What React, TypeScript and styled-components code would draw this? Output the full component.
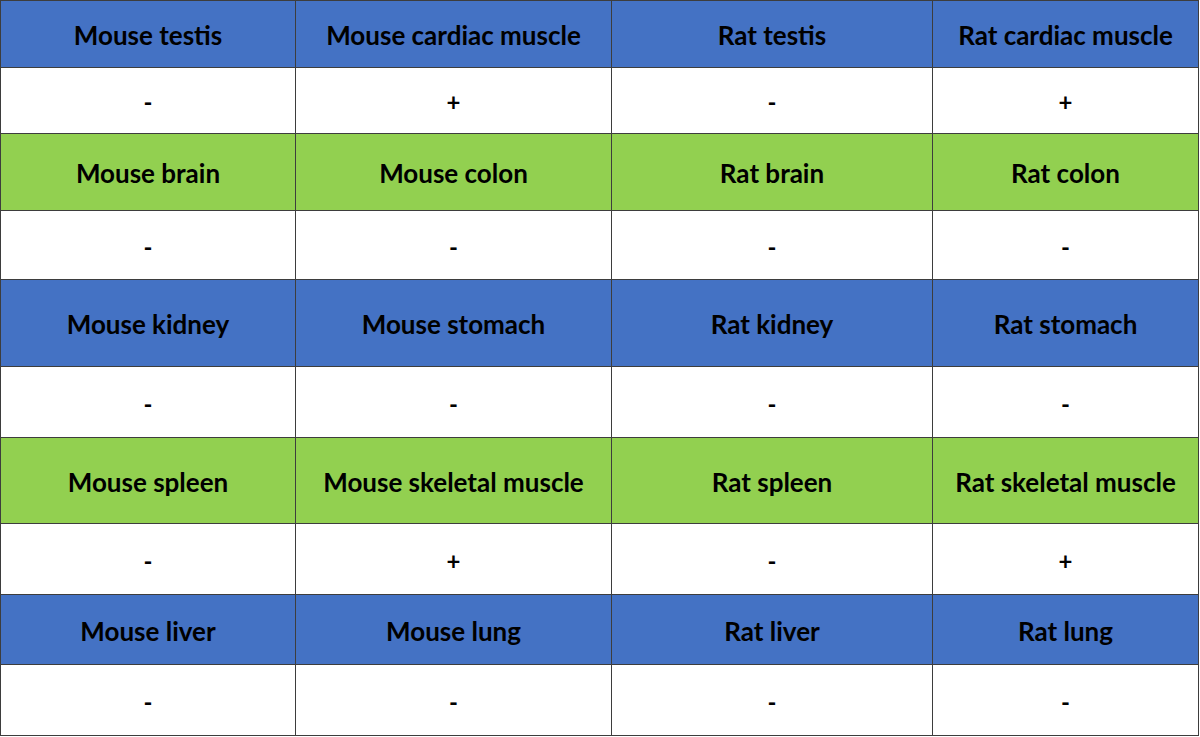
import React from "react";
import styled, { createGlobalStyle } from "styled-components";

const Global = createGlobalStyle`
  html, body { margin: 0; padding: 0; background: #ffffff; }
  body { font-family: Lato, "Open Sans", sans-serif; }
`;

const Grid = styled.div`
  display: grid;
  width: 1199px;
  grid-template-columns: 294px 315px 320px 265px;
  grid-template-rows: 66px 65px 76px 68px 86px 70px 85px 70px 69px 70px;
  gap: 1px;
  padding: 1px;
  box-sizing: border-box;
  background: #3d3d3d;
`;

const Cell = styled.div<{ $tone: "blue" | "green" | "white" }>`
  display: flex;
  align-items: center;
  justify-content: center;
  padding-top: 2px;
  background: ${(p) => (p.$tone === "blue" ? "#4472C4" : p.$tone === "green" ? "#92D050" : "#ffffff")};
  color: #000;
  font-family: Lato, "Open Sans", sans-serif;
  font-weight: 700;
  font-size: ${(p) => (p.$tone === "white" ? "24px" : "26px")};
  white-space: nowrap;
`;

const groups: { tone: "blue" | "green"; names: string[]; values: string[] }[] = [
  { tone: "blue", names: ["Mouse testis", "Mouse cardiac muscle", "Rat testis", "Rat cardiac muscle"], values: ["-", "+", "-", "+"] },
  { tone: "green", names: ["Mouse brain", "Mouse colon", "Rat brain", "Rat colon"], values: ["-", "-", "-", "-"] },
  { tone: "blue", names: ["Mouse kidney", "Mouse stomach", "Rat kidney", "Rat stomach"], values: ["-", "-", "-", "-"] },
  { tone: "green", names: ["Mouse spleen", "Mouse skeletal muscle", "Rat spleen", "Rat skeletal muscle"], values: ["-", "+", "-", "+"] },
  { tone: "blue", names: ["Mouse liver", "Mouse lung", "Rat liver", "Rat lung"], values: ["-", "-", "-", "-"] },
];

export default function App() {
  return (
    <>
      <Global />
      <Grid>
        {groups.map((g, gi) => (
          <React.Fragment key={gi}>
            {g.names.map((n) => (
              <Cell key={n} $tone={g.tone}>{n}</Cell>
            ))}
            {g.values.map((v, vi) => (
              <Cell key={`${gi}-${vi}`} $tone="white">{v}</Cell>
            ))}
          </React.Fragment>
        ))}
      </Grid>
    </>
  );
}
